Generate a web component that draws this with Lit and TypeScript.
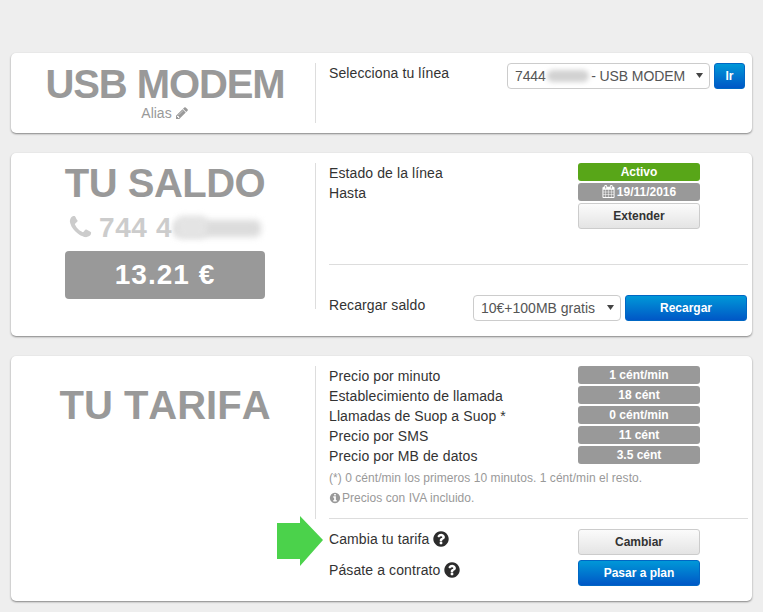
import { LitElement, html, css, svg } from "lit";
import { customElement } from "lit/decorators.js";

const P = {
  q: "M1024 1376v-192q0-14-9-23t-23-9h-192q-14 0-23 9t-9 23v192q0 14 9 23t23 9h192q14 0 23-9t9-23zm256-672q0-88-55.5-163t-138.5-116-170-41q-243 0-371 213-15 24 8 42l132 100q7 6 19 6 16 0 25-12 53-68 86-92 34-24 86-24 48 0 85.5 26t37.5 59q0 38-20 61t-68 45q-63 28-115.5 86.5t-52.5 125.5v36q0 14 9 23t23 9h192q14 0 23-9t9-23q0-19 21.5-49.5t54.5-49.5q32-18 49-28.5t46-35 44.5-48 28-60.5 12.5-81zm384 192q0 209-103 385.5t-279.5 279.5-385.5 103-385.5-103-279.5-279.5-103-385.5 103-385.5 279.5-279.5 385.5-103 385.5 103 279.5 279.5 103 385.5z",
  info: "M1152 1376v-160q0-14-9-23t-23-9h-96v-512q0-14-9-23t-23-9h-320q-14 0-23 9t-9 23v160q0 14 9 23t23 9h96v320h-96q-14 0-23 9t-9 23v160q0 14 9 23t23 9h448q14 0 23-9t9-23zm-128-896v-160q0-14-9-23t-23-9h-192q-14 0-23 9t-9 23v160q0 14 9 23t23 9h192q14 0 23-9t9-23zm640 416q0 209-103 385.5t-279.5 279.5-385.5 103-385.5-103-279.5-279.5-103-385.5 103-385.5 279.5-279.5 385.5-103 385.5 103 279.5 279.5 103 385.5z",
  phone: "M1600 1240q0 27-10 70.5t-21 68.5q-21 50-122 106-94 51-186 51-27 0-53-3.5t-57.5-12.5-47-14.5-55.5-20.5-49-18q-98-35-175-83-127-79-264-216t-216-264q-48-77-83-175-3-9-18-49t-20.5-55.5-14.5-47-12.5-57.5-3.5-53q0-92 51-186 56-101 106-122 25-11 68.5-21t70.5-10q14 0 21 3 18 6 53 76 11 19 30 54t35 63.5 31 53.5q3 4 17.5 25t21.5 35.5 7 28.5q0 20-28.5 50t-62 55-62 53-28.5 46q0 9 5 22.5t8.5 20.5 14 24 11.5 19q76 137 174 235t235 174q2 1 19 11.5t24 14 20.5 8.5 22.5 5q18 0 46-28.5t53-62 55-62 50-28.5q14 0 28.5 7t35.5 21.5 25 17.5q25 15 53.5 31t63.5 35 54 30q70 35 76 53 3 7 3 21z",
  pencil: "M491 1536l91-91-235-235-91 91v107h128v128h107zm523-928q0-22-22-22-10 0-17 7l-542 542q-7 7-7 17 0 22 22 22 10 0 17-7l542-542q7-7 7-17zm-54-192l416 416-832 832h-416v-416zm683 96q0 53-37 90l-166 166-416-416 166-165q36-38 90-38 53 0 91 38l235 234q37 39 37 91z",
  cal: "M192 1664h288v-288h-288v288zm352 0h320v-288h-320v288zm-352-352h288v-320h-288v320zm352 0h320v-320h-320v320zm-352-384h288v-288h-288v288zm736 736h320v-288h-320v288zm-384-736h320v-288h-320v288zm768 736h288v-288h-288v288zm-384-352h320v-320h-320v320zm-352-864v-288q0-13-9.5-22.5t-22.5-9.5h-64q-13 0-22.5 9.5t-9.5 22.5v288q0 13 9.5 22.5t22.5 9.5h64q13 0 22.5-9.5t9.5-22.5zm736 864h288v-320h-288v320zm-384-384h320v-288h-320v288zm384 0h288v-288h-288v288zm32-480v-288q0-13-9.5-22.5t-22.5-9.5h-64q-13 0-22.5 9.5t-9.5 22.5v288q0 13 9.5 22.5t22.5 9.5h64q13 0 22.5-9.5t9.5-22.5zm384-64v1280q0 52-38 90t-90 38h-1408q-52 0-90-38t-38-90v-1280q0-52 38-90t90-38h128v-96q0-66 47-113t113-47h64q66 0 113 47t47 113v96h384v-96q0-66 47-113t113-47h64q66 0 113 47t47 113v96h128q52 0 90 38t38 90z",
};

const icon = (d: string, cls: string) =>
  html`<svg class=${cls} viewBox="0 0 1792 1792" fill="currentColor">${svg`<path d=${d}></path>`}</svg>`;

const caret = html`<svg class="caret" viewBox="0 0 7 5" aria-hidden="true"><polygon points="0,0 7,0 3.5,5" fill="#444"></polygon></svg>`;

const rates = [
  ["Precio por minuto", "1 cént/min"],
  ["Establecimiento de llamada", "18 cént"],
  ["Llamadas de Suop a Suop *", "0 cént/min"],
  ["Precio por SMS", "11 cént"],
  ["Precio por MB de datos", "3.5 cént"],
];

@customElement("app-root")
export class AppRoot extends LitElement {
  static styles = css`
    :host {
      display: block;
      min-height: 612px;
      background: #eeeeee;
      font-family: "Liberation Sans", Arial, sans-serif;
      font-size: 14px;
      color: #333;
      position: relative;
      overflow: hidden;
    }
    .page {
      display: flex;
      flex-direction: column;
      gap: 20px;
      padding: 53px 11px 11px;
    }
    .card {
      background: #fff;
      border-radius: 5px;
      box-shadow: 0 1px 2px rgba(0, 0, 0, 0.45);
      display: flex;
      align-items: flex-start;
      padding: 10px 4px 15px 0;
    }
    .card.top {
      padding-bottom: 10px;
    }
    .left {
      width: 305px;
      flex: none;
      box-sizing: border-box;
      padding-left: 4px;
      border-right: 1px solid #ddd;
      display: flex;
      flex-direction: column;
      align-items: center;
      color: #999;
    }
    .left.h60 { height: 60px; }
    .left.h146 { height: 146px; }
    .left.h153 { height: 153px; }
    .right {
      flex: 1;
      margin-left: 13px;
      min-width: 0;
    }
    h1 {
      margin: 0;
      font-size: 40px;
      line-height: 40px;
      font-weight: 700;
      color: #999;
      white-space: nowrap;
    }
    .t-usb { padding-top: 1px; letter-spacing: -1.1px; }
    .t-saldo { letter-spacing: -0.5px; }
    .t-tarifa { margin-top: 19px; font-kerning: none; }
    .alias {
      line-height: 18px;
      display: flex;
      align-items: center;
      gap: 3px;
    }
    .i-pencil { width: 14px; height: 14px; }
    .phone {
      margin-top: 9px;
      width: 200px;
      height: 32px;
      display: flex;
      align-items: center;
      gap: 5px;
      color: #ccc;
      font-size: 28px;
      font-weight: 700;
      line-height: 32px;
      letter-spacing: 0.6px;
      position: relative;
      white-space: nowrap;
      padding-left: 2px;
      box-sizing: border-box;
    }
    .i-phone { width: 27px; height: 27px; margin-top: -2px; flex: none; }
    .smear {
      position: absolute;
      filter: blur(3px);
      background: #dcdcdc;
      border-radius: 6px;
    }
    .smear.a { left: 108px; top: 8px; width: 88px; height: 17px; }
    .smear.a2 { left: 112px; top: 4px; width: 30px; height: 22px; background: #e4e4e4; }
    .balance {
      margin-top: 7px;
      width: 200px;
      height: 48px;
      background: #999;
      border-radius: 4px;
      color: #fff;
      font-size: 28px;
      font-weight: 700;
      letter-spacing: 1px;
      line-height: 48px;
      text-align: center;
    }
    .row {
      display: flex;
      align-items: flex-start;
      justify-content: space-between;
    }
    .lbl { line-height: 20px; letter-spacing: 0.1px; }
    .sel-group {
      display: flex;
      gap: 4px;
      position: relative;
      margin-right: 3px;
    }
    .sel {
      position: relative;
      display: block;
      height: 26px;
    }
    select {
      appearance: none;
      -webkit-appearance: none;
      display: block;
      width: 100%;
      height: 26px;
      border: 1px solid #ccc;
      border-radius: 4px;
      background-color: #fff;
      color: #555;
      font: 14px "Liberation Sans", Arial, sans-serif;
      padding: 0 0 0 7px;
      margin: 0;
      box-sizing: border-box;
    }
    .caret {
      position: absolute;
      right: 7px;
      top: 10px;
      width: 7px;
      height: 5px;
      pointer-events: none;
    }
    .sel-line { width: 203px; }
    .sel-line select { letter-spacing: -0.1px; }
    .sel-top { width: 148px; }
    .smear.b {
      left: 40px;
      top: 7px;
      width: 42px;
      height: 12px;
      background: #d2d2d2;
      filter: blur(2.5px);
    }
    .btn {
      height: 26px;
      box-sizing: border-box;
      border-radius: 3px;
      font: 700 12px/24px "Liberation Sans", Arial, sans-serif;
      text-align: center;
      padding: 0;
      margin: 0;
      display: block;
      cursor: pointer;
    }
    .blue {
      border: 1px solid #0067c4;
      color: #fff;
      background: linear-gradient(#0098d8, #0057c6);
    }
    .grey {
      border: 1px solid #ccc;
      color: #333;
      background: linear-gradient(#fbfbfb, #e4e4e4);
    }
    .w122 { width: 122px; }
    .ir { width: 31px; }
    .side {
      display: flex;
      flex-direction: column;
      width: 122px;
      margin-right: 48px;
      gap: 2px;
    }
    .badge {
      height: 18px;
      line-height: 18px;
      border-radius: 3px;
      background: #999;
      color: #fff;
      font-size: 12px;
      font-weight: 700;
      text-align: center;
      white-space: nowrap;
    }
    .badge.green { background: #58a618; }
    .badge .i-cal { width: 13px; height: 13px; vertical-align: -2px; margin-right: 2px; color: #fff; }
    hr {
      border: 0;
      border-top: 1px solid #ddd;
      margin: 0;
    }
    .status { height: 101px; }
    .hr-balance { margin-bottom: 30px; }
    .recharge-ctl { display: flex; gap: 4px; }
    .recharge-ctl .btn { width: 122px; margin-right: 1px; }
    .rates { display: flex; flex-direction: column; }
    .note {
      font-size: 12px;
      color: #999;
      line-height: 20px;
      letter-spacing: 0.05px;
      display: flex;
      align-items: center;
      gap: 1px;
    }
    .note.first { margin-top: 2px; }
    .i-info { width: 12px; height: 12px; color: #999; flex: none; }
    .hr-rates { margin-top: 10px; margin-bottom: 10px; }
    .actions {
      display: grid;
      grid-template-columns: 1fr 122px;
      row-gap: 5px;
      margin-right: 48px;
    }
    .action-lbl {
      display: flex;
      align-items: center;
      gap: 3px;
      height: 20px;
      letter-spacing: 0.1px;
    }
    .i-q { width: 18px; height: 18px; color: #2c2c2c; }
    .arrow {
      position: absolute;
      left: 277px;
      top: 516px;
      width: 46px;
      height: 50px;
    }
  `;

  render() {
    return html`
      <div class="page">
        <section class="card top">
          <div class="left h60">
            <h1 class="t-usb">USB MODEM</h1>
            <div class="alias">Alias ${icon(P.pencil, "i-pencil")}</div>
          </div>
          <div class="right row">
            <div class="lbl">Selecciona tu línea</div>
            <div class="sel-group">
              <span class="sel sel-line">
                <select aria-label="Línea">
                  <option>7444\u00a0\u00a0\u00a0\u00a0\u00a0\u00a0\u00a0\u00a0\u00a0\u00a0\u00a0 - USB MODEM</option>
                </select>
                ${caret}
              </span>
              <div class="smear b"></div>
              <button class="btn blue ir">Ir</button>
            </div>
          </div>
        </section>

        <section class="card">
          <div class="left h146">
            <h1 class="t-saldo">TU SALDO</h1>
            <div class="phone">
              ${icon(P.phone, "i-phone")}<span>744 4</span>
              <div class="smear a"></div>
              <div class="smear a2"></div>
            </div>
            <div class="balance">13.21 €</div>
          </div>
          <div class="right">
            <div class="row status">
              <div>
                <div class="lbl">Estado de la línea</div>
                <div class="lbl">Hasta</div>
              </div>
              <div class="side">
                <div class="badge green">Activo</div>
                <div class="badge">${icon(P.cal, "i-cal")}19/11/2016</div>
                <button class="btn grey w122">Extender</button>
              </div>
            </div>
            <hr class="hr-balance" />
            <div class="row">
              <div class="lbl">Recargar saldo</div>
              <div class="recharge-ctl">
                <span class="sel sel-top">
                  <select aria-label="Recarga">
                    <option>10€+100MB gratis</option>
                  </select>
                  ${caret}
                </span>
                <button class="btn blue">Recargar</button>
              </div>
            </div>
          </div>
        </section>

        <section class="card">
          <div class="left h153">
            <h1 class="t-tarifa">TU TARIFA</h1>
          </div>
          <div class="right">
            <div class="row">
              <div class="rates">
                ${rates.map((r) => html`<div class="lbl">${r[0]}</div>`)}
              </div>
              <div class="side">
                ${rates.map((r) => html`<div class="badge">${r[1]}</div>`)}
              </div>
            </div>
            <div class="note first">(*) 0 cént/min los primeros 10 minutos. 1 cént/min el resto.</div>
            <div class="note">${icon(P.info, "i-info")}<span>Precios con IVA incluido.</span></div>
            <hr class="hr-rates" />
            <div class="actions">
              <div class="action-lbl">Cambia tu tarifa ${icon(P.q, "i-q")}</div>
              <button class="btn grey w122">Cambiar</button>
              <div class="action-lbl">Pásate a contrato ${icon(P.q, "i-q")}</div>
              <button class="btn blue w122">Pasar a plan</button>
            </div>
          </div>
        </section>
      </div>
      <svg class="arrow" viewBox="0 0 46 50" aria-hidden="true">
        <polygon points="0,7 23,7 23,0 46,24 23,50 23,43 0,43" fill="#4bd24b"></polygon>
      </svg>
    `;
  }
}
